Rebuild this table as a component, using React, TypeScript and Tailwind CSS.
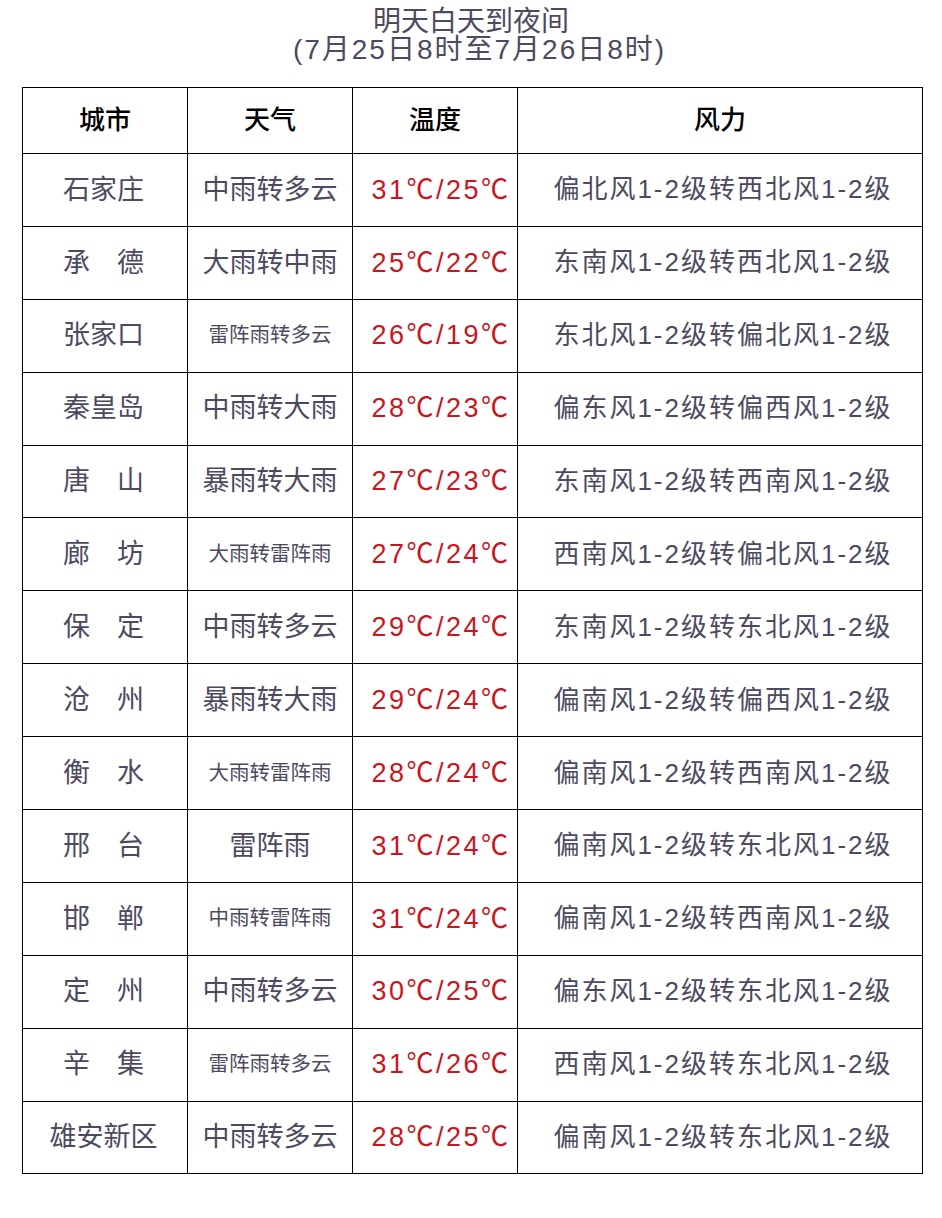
import React from 'react';

type Row = {
  city: string;
  weather: string;
  small?: boolean;
  temp: string;
  wind: string;
};

const rows: Row[] = [
  { city: '石家庄', weather: '中雨转多云', temp: '31℃/25℃', wind: '偏北风1-2级转西北风1-2级' },
  { city: '承　德', weather: '大雨转中雨', temp: '25℃/22℃', wind: '东南风1-2级转西北风1-2级' },
  { city: '张家口', weather: '雷阵雨转多云', small: true, temp: '26℃/19℃', wind: '东北风1-2级转偏北风1-2级' },
  { city: '秦皇岛', weather: '中雨转大雨', temp: '28℃/23℃', wind: '偏东风1-2级转偏西风1-2级' },
  { city: '唐　山', weather: '暴雨转大雨', temp: '27℃/23℃', wind: '东南风1-2级转西南风1-2级' },
  { city: '廊　坊', weather: '大雨转雷阵雨', small: true, temp: '27℃/24℃', wind: '西南风1-2级转偏北风1-2级' },
  { city: '保　定', weather: '中雨转多云', temp: '29℃/24℃', wind: '东南风1-2级转东北风1-2级' },
  { city: '沧　州', weather: '暴雨转大雨', temp: '29℃/24℃', wind: '偏南风1-2级转偏西风1-2级' },
  { city: '衡　水', weather: '大雨转雷阵雨', small: true, temp: '28℃/24℃', wind: '偏南风1-2级转西南风1-2级' },
  { city: '邢　台', weather: '雷阵雨', temp: '31℃/24℃', wind: '偏南风1-2级转东北风1-2级' },
  { city: '邯　郸', weather: '中雨转雷阵雨', small: true, temp: '31℃/24℃', wind: '偏南风1-2级转西南风1-2级' },
  { city: '定　州', weather: '中雨转多云', temp: '30℃/25℃', wind: '偏东风1-2级转东北风1-2级' },
  { city: '辛　集', weather: '雷阵雨转多云', small: true, temp: '31℃/26℃', wind: '西南风1-2级转东北风1-2级' },
  { city: '雄安新区', weather: '中雨转多云', temp: '28℃/25℃', wind: '偏南风1-2级转东北风1-2级' },
];

// latin digits get Arial widths, CJK falls through to Noto
const font = { fontFamily: '"Liberation Sans", "Noto Sans CJK SC", sans-serif' };

export default function App() {
  return (
    <div className="min-h-[1218px] w-[942px] bg-white pt-[8px]" style={font}>
      {/* title */}
      <div className="text-center text-[#4d4a5f] text-[28px] leading-[28px]">
        <div>明天白天到夜间</div>
        <div className="tracking-[2px] pl-[17px]">(7月25日8时至7月26日8时)</div>
      </div>

      <table className="mt-[23px] ml-[22px] w-[901px] border-collapse table-fixed">
        <colgroup>
          <col className="w-[165px]" />
          <col className="w-[165px]" />
          <col className="w-[165px]" />
          <col />
        </colgroup>
        <thead>
          <tr className="h-[66px]">
            {['城市', '天气', '温度', '风力'].map(h => (
              <th key={h} className="border-[1.5px] border-black text-[26px] font-medium text-black text-center align-middle">
                {h}
              </th>
            ))}
          </tr>
        </thead>
        <tbody>
          {rows.map(r => (
            <tr key={r.city} className="h-[72.9px]">
              <td className="border-[1.5px] border-black text-center text-[27px] text-[#4d4a5f] pr-[3px]">{r.city}</td>
              <td className={`border-[1.5px] border-black text-center text-[#4d4a5f] ${r.small ? 'text-[20.5px]' : 'text-[27px]'}`}>
                {r.weather}
              </td>
              <td className="border-[1.5px] border-black text-center text-[27px] text-[#c8161e] tracking-[2.5px] pl-[12px]">{r.temp}</td>
              <td className="border-[1.5px] border-black text-center text-[26px] text-[#4d4a5f] tracking-[2px] pl-[6px]">{r.wind}</td>
            </tr>
          ))}
        </tbody>
      </table>
    </div>
  );
}
